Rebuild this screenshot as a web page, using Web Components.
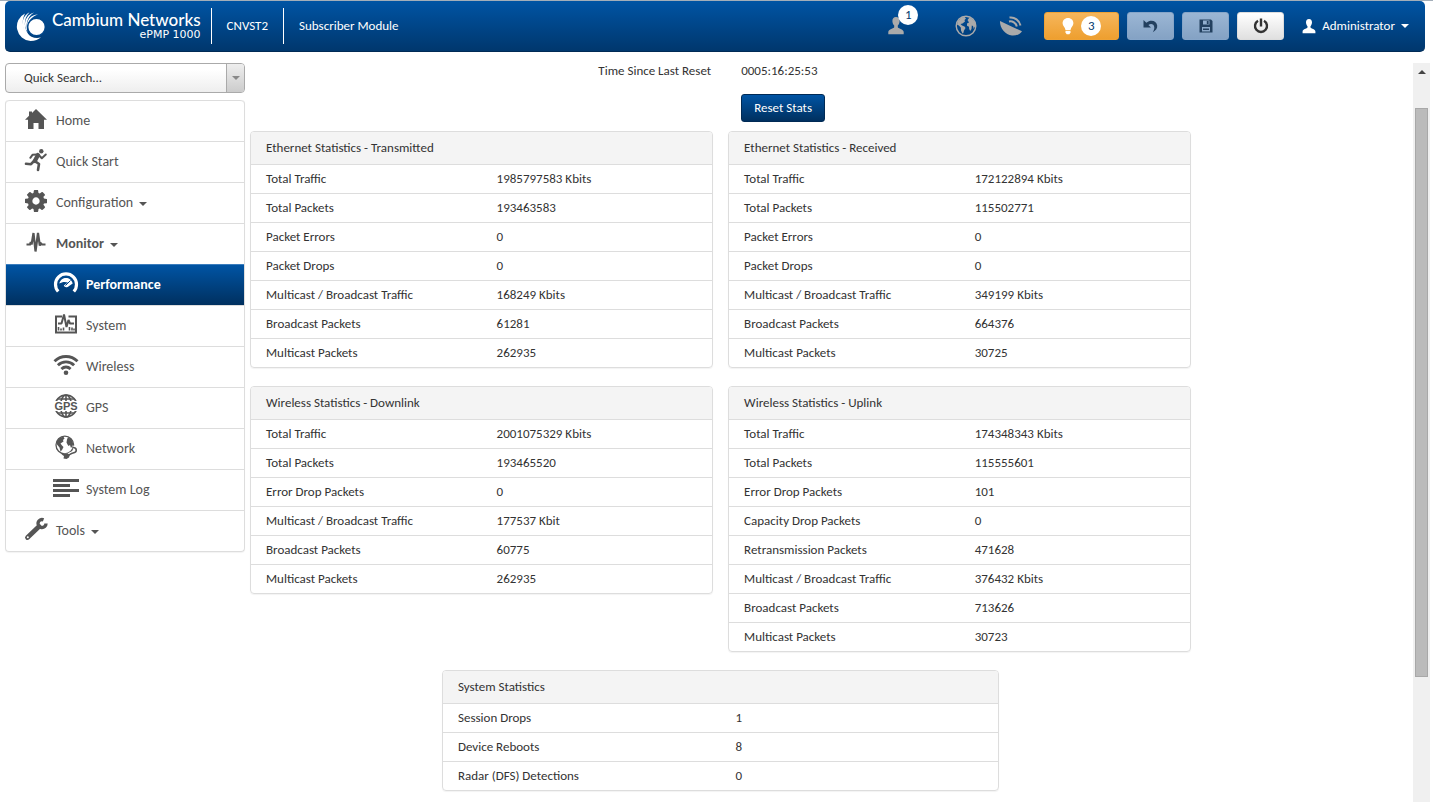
<!DOCTYPE html>
<html lang="en">
<head>
<meta charset="utf-8">
<title>ePMP 1000 - Performance</title>
<style>
    body {
        margin: 0;
        background: white;
        color: #333;
        font: 13px/16px Calibri, Carlito, Lato, sans-serif;
    }
</style>
</head>
<body>
<ap-shell>
    <top-bar slot="header" device="CNVST2" mode="Subscriber Module" user="Administrator"></top-bar>
    <quick-search slot="side"></quick-search>
    <side-nav slot="side">
        <nav-item icon="home">Home</nav-item>
        <nav-item icon="run">Quick Start</nav-item>
        <nav-item icon="cog" caret>Configuration</nav-item>
        <nav-item icon="pulse" caret open>Monitor</nav-item>
        <nav-item icon="gauge" sub active>Performance</nav-item>
        <nav-item icon="system" sub>System</nav-item>
        <nav-item icon="wifi" sub>Wireless</nav-item>
        <nav-item icon="gps" sub>GPS</nav-item>
        <nav-item icon="network" sub>Network</nav-item>
        <nav-item icon="log" sub>System Log</nav-item>
        <nav-item icon="wrench" caret>Tools</nav-item>
    </side-nav>
    <performance-page></performance-page>
</ap-shell>

<script>
const icons = {
    logo: `<svg viewBox="0 0 29 29" width="29" height="29" fill="currentColor">
        <path d="M9 1.500A14.500 14.500 0 0 0 14.500 29C19 29 22.500 27.500 25 25.300C13 29 2 15 9 1.500Z"/>
        <path d="M13.500 .3C4 5 4.500 19 14 24.500C7.500 17 7 7 13.500 .3Z"/>
        <path d="M18 .5C9 3 6.500 13 11.500 20C9.500 12 11 5 18 .5Z"/>
        <path d="M22 2.500C15 2.500 10.500 8 11.200 14C13 8 16 4.500 22 2.500Z"/>
        <circle cx="20.500" cy="15" r="8.800" stroke="#00478c" stroke-width="1.400"/>
    </svg>`,
    user: `<svg viewBox="0 0 16 18" width="16" height="18" fill="currentColor">
        <path d="M8 0C5.500 0 4.300 1.800 4.400 4.300C4.500 6.200 5.200 7.600 6.200 8.600V10.200C6 11.500 .5 11.800 .3 15V17.200H15.700V15C15.500 11.800 10 11.500 9.800 10.200V8.600C10.800 7.600 11.500 6.200 11.600 4.300C11.700 1.800 10.500 0 8 0Z"/>
    </svg>`,
    account: `<svg viewBox="0 0 16 18" width="14" height="15" fill="currentColor">
        <path d="M8 0C5.500 0 4.300 1.800 4.400 4.300C4.500 6.200 5.200 7.600 6.200 8.600V10.200C6 11.500 .5 11.800 .3 15V17.200H15.700V15C15.500 11.800 10 11.500 9.800 10.200V8.600C10.800 7.600 11.500 6.200 11.600 4.300C11.700 1.800 10.500 0 8 0Z"/>
    </svg>`,
    globe: `<svg viewBox="0 0 22 22" width="22" height="22">
        <circle cx="11" cy="11" r="9.800" fill="none" stroke="currentColor" stroke-width="1.400"/>
        <g fill="currentColor">
            <path d="M3 6L6.500 2.600L9.500 2L11 3.500L9.500 5L10 6.500L7.500 8.500L5.500 9L7 10.500L9.500 11.500L10.500 13L9 15.500L8.300 18L7.500 18.500L6 15.500L5.800 12.500L3.800 10.500L2 9.500Z"/>
            <path d="M12.500 5L14.500 2.500L17.500 4L20 7.500L20.800 11.500L19.500 12L18.800 14L18 11L16.800 10.500L16.500 14L15.200 16L14.200 14L14 11.800L12 10.800L12 8.500L14 7.500Z"/>
        </g>
    </svg>`,
    dish: `<svg viewBox="0 0 24 22" width="24" height="22">
        <path d="M1 6C.5 12.500 6 20 13 20.500C17.500 20.800 21.500 19 23 16.200L12.500 11.500Z" fill="currentColor"/>
        <path d="M10 6.500C13.500 5.800 17 8 17.800 11.500M10.500 2.600C15.500 1.800 20.500 5.500 21.500 10.500" fill="none" stroke="currentColor" stroke-width="2"/>
    </svg>`,
    bulb: `<svg viewBox="0 0 12 17" width="12" height="17" fill="currentColor">
        <path d="M6 0C2.700 0 .6 2.300 .6 5.200C.6 8 3 9 3.500 12H8.500C9 9 11.400 8 11.400 5.200C11.400 2.300 9.300 0 6 0Z"/>
        <path d="M3.500 12.800H8.500V14.500L7.300 16.200H4.700L3.500 14.500Z"/>
    </svg>`,
    undo: `<svg viewBox="0 0 15 14" width="15" height="14" fill="currentColor">
        <path d="M.5 1V8.500H8L5.400 6C8 4.200 11 5.200 11.300 8.300C11.400 10 10.800 11.700 9.800 13.200C13 11.500 14.500 9.200 14.200 6.600C13.500 1.500 7.500 .2 3.300 3.800Z"/>
    </svg>`,
    save: `<svg viewBox="0 0 14 14" width="14" height="14" fill="currentColor">
        <path fill-rule="evenodd" d="M.5 .5H12L13.500 2V13.500H.5ZM4 1.500V5.500H10.500V1.500ZM3 8V12.500H11V8ZM7.800 2H9.600V5H7.800Z"/>
        <path d="M4 9.500H10V11H4Z"/>
    </svg>`,
    power: `<svg viewBox="0 0 16 16" width="16" height="16" fill="none" stroke="currentColor" stroke-width="2.400">
        <path d="M5 2.800A6 6 0 1 0 11 2.800M8 .5V8.500"/>
    </svg>`,
    home: `<svg viewBox="0 0 24 24" width="24" height="24" fill="currentColor">
        <path d="M12 2L23 12.800H20V22H14.500V16H9.500V22H4V12.800H1L5 8.800V4.500H8V6Z"/>
    </svg>`,
    run: `<svg viewBox="0 0 24 24" width="24" height="24">
        <circle cx="17.300" cy="3.300" r="2.200" fill="currentColor"/>
        <g fill="none" stroke="currentColor" stroke-linecap="round" stroke-linejoin="round">
            <path d="M14 7L10.800 13" stroke-width="4.200"/>
            <path d="M13 6.500L8.500 6.800L6.300 9.800M15.200 7.500L17.800 10.200L21.800 6.500" stroke-width="2"/>
            <path d="M11.500 13.500L15 16L14 22M10 13L7 16.200L2 15.800" stroke-width="2.600"/>
        </g>
    </svg>`,
    cog: `<svg viewBox="0 0 1536 1536" width="22" height="22" fill="currentColor">
        <path d="M1024 768q0-106-75-181t-181-75-181 75-75 181 75 181 181 75 181-75 75-181zm512-109v222q0 12-8 23t-20 13l-185 28q-19 54-39 91 35 50 107 138 10 12 10 25t-9 23q-27 37-99 108t-94 71q-12 0-26-9l-138-108q-44 23-91 38-16 136-29 186-7 28-36 28h-222q-14 0-24.500-8.500t-11.500-21.500l-28-184q-49-16-90-37l-141 107q-10 9-25 9-14 0-25-11-126-114-165-168-7-10-7-23 0-12 8-23 15-21 51-66.500t54-70.500q-27-50-41-99l-183-27q-13-2-21-12.500t-8-23.500v-222q0-12 8-23t19-13l186-28q14-46 39-92-40-57-107-138-10-12-10-24 0-10 9-23 26-36 98.500-107.500t94.500-71.500q13 0 26 10l138 107q44-23 91-38 16-136 29-186 7-28 36-28h222q14 0 24.500 8.500t11.500 21.500l28 184q49 16 90 37l142-107q9-9 24-9 13 0 25 10 129 119 165 170 7 8 7 22 0 12-8 23-15 21-51 66.500t-54 70.500q26 50 41 98l183 28q13 2 21 12.500t8 23.500z"/>
    </svg>`,
    pulse: `<svg viewBox="0 0 24 24" width="24" height="24" fill="none" stroke="currentColor" stroke-width="2.200" stroke-miterlimit="2" stroke-linejoin="miter">
        <path d="M2.500 14.500H6L6.800 12L7.600 14.500L9.500 3L11.500 21.500L14 3L15.800 15.500L17 13.500L18 14.500H21.500"/>
    </svg>`,
    gauge: `<svg viewBox="0 0 26 24" width="26" height="24">
        <path d="M5.200 20.500A10.500 10.500 0 1 1 20.800 20.500" fill="none" stroke="currentColor" stroke-width="3.200"/>
        <path d="M6.300 12.500C7.500 8.500 10 7 13 7S18.500 8.500 19.700 12.500L15.800 15.300A3 3 0 0 1 10.800 14.500L15 11.500C12 10.500 9 10.800 6.300 12.500Z" fill="currentColor"/>
        <path d="M17.500 9.500L12.500 14.500" stroke="#00468c" stroke-width="1"/>
    </svg>`,
    system: `<svg viewBox="0 0 24 24" width="24" height="24" fill="none" stroke="currentColor" stroke-width="2">
        <path d="M8 4.500H2V20.500H22V4.500H14.500"/>
        <path d="M4 11.500H7.500L10 2.500L12.500 15L14.500 8L16 11.500H20" stroke-linejoin="bevel" stroke-width="2"/>
        <path d="M4.500 15V18.500M7 16.500V18.500M9.500 15.500V18.500M15.500 15V18.500M18 15.500V18.500M20 16.500V18.500" stroke-width="1.600"/>
    </svg>`,
    wifi: `<svg viewBox="0 0 26 24" width="26" height="24">
        <path d="M1.500 8.200C8 1.900 18 1.900 24.500 8.200M4.900 12.200C9.500 7.800 16.500 7.800 21.100 12.200M8.400 16C11.200 13.400 14.800 13.400 17.600 16" fill="none" stroke="currentColor" stroke-width="2.900"/>
        <circle cx="13" cy="19.800" r="2.300" fill="currentColor"/>
    </svg>`,
    gps: `<svg viewBox="0 0 26 24" width="26" height="24">
        <g fill="none" stroke="currentColor" stroke-width="1.600">
            <circle cx="13" cy="12" r="11"/>
            <ellipse cx="13" cy="12" rx="5.500" ry="11"/>
            <path d="M13 1V23M4.500 5H21.500M4.500 19H21.500"/>
        </g>
        <path d="M0 7H26V17H0Z" fill="white"/>
        <text x="13" y="16" text-anchor="middle" font-family="Liberation Sans" font-size="11" font-weight="bold" fill="currentColor">GPS</text>
    </svg>`,
    network: `<svg viewBox="0 0 26 24" width="26" height="24">
        <circle cx="11.800" cy="10" r="8.800" fill="none" stroke="currentColor" stroke-width="1.300"/>
        <g fill="currentColor">
            <path d="M4 6L7 2.500L10.500 1.800L11.500 3.500L10 5L10.500 6.500L7.500 8.500L9 10.500L10.500 12L9 15L7.500 16.500L6.500 12.500L4 9.500Z"/>
            <path d="M14 4.500L15 2L18.500 4.500L20.300 8.500L19.500 11L18 13L17 10L15.500 11L14.500 9.500L13.500 7.500Z"/>
        </g>
        <path d="M20 12.500C24.500 13 24.500 17.500 20 18.200C18 18.500 17 19.500 15.500 20.200L10 21" fill="none" stroke="white" stroke-width="4"/>
        <path d="M19.500 12.300C24.500 12.800 24.500 17.300 20 18C18 18.300 17 19.500 15.500 20.200" fill="none" stroke="currentColor" stroke-width="1.500"/>
        <path d="M8.500 19.500L10.500 18.500L14.500 18.300L16.800 20L16 22.500L13.500 24L10.500 23.500L11 21Z" fill="currentColor"/>
    </svg>`,
    log: `<svg viewBox="0 0 26 24" width="26" height="24" fill="currentColor">
        <path d="M0 3H26V6H0ZM0 8H17V11H0ZM0 13H26V16H0ZM0 18H17V21H0Z"/>
    </svg>`,
    wrench: `<svg viewBox="0 0 24 24" width="24" height="24" fill="none" stroke="currentColor">
        <path d="M3.500 20.500L15 9.500" stroke-width="4.800" stroke-linecap="round"/>
        <path d="M19.500 2.800A4 4 0 1 0 22 6.500" stroke-width="3.400"/>
        <circle cx="3.800" cy="20.200" r="1" fill="white" stroke="none"/>
    </svg>`,
}

class UiElement extends HTMLElement {
    connectedCallback () {
        if(this.shadowRoot) return
        this.attachShadow({mode: 'open'}).innerHTML = this.render()
    }
    attr(name) {
        return this.getAttribute(name) || ''
    }
}

class UiIcon extends UiElement {
    render() {
        return /* HTML */`
<style>
    :host { display: inline-flex; flex: none; }
    svg { display: block; }
</style>
${icons[this.attr('name')]}`
    }
}
customElements.define('ui-icon', UiIcon)

class UiCaret extends UiElement {
    render() {
        return /* HTML */`
<style>
    :host {
        display: inline-block;
        flex: none;
        border: 4px solid transparent;
        border-top-color: currentColor;
        border-bottom: 0;
    }
    :host([up]) {
        border-top: 0;
        border-bottom: 4px solid currentColor;
    }
</style>`
    }
}
customElements.define('ui-caret', UiCaret)

class ApShell extends UiElement {
    render() {
        return /* HTML */`
<style>
    :host {
        display: flex;
        flex-direction: column;
        min-height: 100vh;
        box-sizing: border-box;
        border-top: 1px solid #a3aeb9;
    }
    .body {
        flex: 1;
        display: flex;
        gap: 5px;
        padding: 11px 3px 0 5px;
    }
    aside {
        flex: none;
        width: 240px;
        display: flex;
        flex-direction: column;
        gap: 7px;
    }
    main {
        flex: 1;
    }
    scroll-rail {
        margin-left: -4px;
    }
</style>
<slot name="header"></slot>
<div class="body">
    <aside><slot name="side"></slot></aside>
    <main><slot></slot></main>
    <scroll-rail></scroll-rail>
</div>`
    }
}
customElements.define('ap-shell', ApShell)

class ScrollRail extends UiElement {
    render() {
        return /* HTML */`
<style>
    :host {
        display: flex;
        flex-direction: column;
        align-items: center;
        width: 17px;
        color: #444;
        background: #f0f0f0;
    }
    ui-caret {
        margin: 7px 0 34px;
    }
    .thumb {
        width: 13px;
        flex: 0 0 77%;
        background: #bbb;
        border: 1px solid #a8a8a8;
        box-sizing: border-box;
    }
</style>
<ui-caret up></ui-caret>
<div class="thumb"></div>`
    }
}
customElements.define('scroll-rail', ScrollRail)

class TopBar extends UiElement {
    render() {
        return /* HTML */`
<style>
    :host {
        display: flex;
        align-items: center;
        height: 51px;
        margin: 0 8px 0 5px;
        padding: 0 16px 0 11px;
        box-sizing: border-box;
        border-radius: 5px;
        border-bottom: 1px solid #002a55;
        background: linear-gradient(#0054a4, #00376d);
        color: white;
    }
    .brand {
        display: flex;
        align-items: center;
        gap: 7px;
        padding-right: 10px;
    }
    .name {
        text-align: right;
        font: 500 17px/17px Lato, sans-serif;
    }
    .model {
        font: 11px/14px "DejaVu Sans", sans-serif;
    }
    .cell {
        border-left: 1px solid white;
        line-height: 36px;
        padding: 0 15px;
    }
    .status {
        margin-left: auto;
        display: flex;
        align-items: center;
        color: #aaa;
    }
    .clients {
        position: relative;
        display: flex;
        margin-right: 51px;
    }
    .globe {
        margin-right: 22px;
    }
    .badge {
        display: inline-block;
        min-width: 20px;
        border-radius: 10px;
        background: white;
        color: #00376d;
        line-height: 20px;
        text-align: center;
    }
    .clients .badge {
        position: absolute;
        left: 10px;
        top: -12px;
    }
    .tools {
        display: flex;
        gap: 8px;
        margin: 0 18px 0 21px;
    }
    button {
        display: flex;
        align-items: center;
        justify-content: center;
        gap: 7px;
        width: 47px;
        height: 28px;
        padding: 0;
        border: 1px solid #86a5c8;
        border-radius: 3px;
        background: linear-gradient(#9bb6d4, #84a2c4);
        color: #23405f;
        font: inherit;
    }
    .alert {
        width: 75px;
        color: white;
        border-color: #eea236;
        background: linear-gradient(#f6b65c, #ee9f2f);
    }
    .power {
        color: #333;
        border-color: #ddd;
        background: linear-gradient(white, #e0e0e0);
    }
    a {
        display: flex;
        align-items: center;
        gap: 6px;
        color: white;
        text-decoration: none;
    }
</style>
<div class="brand">
    <ui-icon name="logo"></ui-icon>
    <div class="name">Cambium Networks<div class="model">ePMP 1000</div></div>
</div>
<div class="cell">${this.attr('device')}</div>
<div class="cell">${this.attr('mode')}</div>
<div class="status">
    <div class="clients"><ui-icon name="user"></ui-icon><span class="badge">1</span></div>
    <ui-icon class="globe" name="globe"></ui-icon>
    <ui-icon name="dish"></ui-icon>
</div>
<div class="tools">
    <button class="alert" aria-label="Notifications"><ui-icon name="bulb"></ui-icon><span class="badge">3</span></button>
    <button aria-label="Undo"><ui-icon name="undo"></ui-icon></button>
    <button aria-label="Save"><ui-icon name="save"></ui-icon></button>
    <button class="power" aria-label="Reboot"><ui-icon name="power"></ui-icon></button>
</div>
<a href="#account"><ui-icon name="account"></ui-icon>${this.attr('user')}<ui-caret></ui-caret></a>`
    }
}
customElements.define('top-bar', TopBar)

class QuickSearch extends UiElement {
    render() {
        return /* HTML */`
<style>
    :host {
        display: flex;
        height: 30px;
        box-sizing: border-box;
        border: 1px solid #aaa;
        border-radius: 4px;
        background: linear-gradient(white 20%, #eee);
        overflow: hidden;
    }
    select {
        flex: 1;
        appearance: none;
        border: 0;
        padding: 0 18px;
        background: none;
        color: #333;
        font: inherit;
    }
    .arrow {
        display: flex;
        align-items: center;
        justify-content: center;
        width: 17px;
        border-left: 1px solid #aaa;
        background: linear-gradient(#eee, #ccc);
        color: #888;
    }
</style>
<select aria-label="Quick Search"><option>Quick Search...</option></select>
<span class="arrow"><ui-caret></ui-caret></span>`
    }
}
customElements.define('quick-search', QuickSearch)

class SideNav extends UiElement {
    render() {
        return /* HTML */`
<style>
    :host {
        display: block;
        border: 1px solid #ddd;
        border-top: 0;
        border-radius: 4px;
        box-shadow: 0 1px 1px rgba(0,0,0,0.05);
    }
    nav {
        display: flex;
        flex-direction: column;
    }
    ::slotted(nav-item:first-child) {
        border-radius: 4px 4px 0 0;
    }
</style>
<nav><slot></slot></nav>`
    }
}
customElements.define('side-nav', SideNav)

class NavItem extends UiElement {
    render() {
        const caret = this.hasAttribute('caret') ? '<ui-caret></ui-caret>' : ''
        return /* HTML */`
<style>
    :host {
        display: block;
        border-top: 1px solid #ddd;
        color: #555;
        font-size: 14px;
    }
    a {
        display: flex;
        align-items: center;
        height: 40px;
        padding-left: 18px;
        color: inherit;
        text-decoration: none;
    }
    ui-icon {
        width: 24px;
        justify-content: center;
        margin-right: 8px;
        padding-bottom: 4px;
    }
    ui-caret {
        margin: 2px 0 0 6px;
    }
    :host([sub]) a {
        padding-left: 47px;
    }
    :host([sub]) ui-icon {
        width: 26px;
        margin-right: 7px;
    }
    :host([open]), :host([active]) {
        font-weight: bold;
    }
    :host([active]) {
        color: white;
        border-top-color: #3b7dbd;
        background: linear-gradient(#0054a4, #00305f);
    }
</style>
<a href="#${this.attr('icon')}"><ui-icon name="${this.attr('icon')}"></ui-icon><slot></slot>${caret}</a>`
    }
}
customElements.define('nav-item', NavItem)

class StatPanel extends HTMLElement {
    set data({title, rows}) {
        if(!this.shadowRoot) this.attachShadow({mode: 'open'})
        this.shadowRoot.innerHTML = /* HTML */`
<style>
    :host {
        display: block;
        border: 1px solid #ddd;
        border-radius: 4px;
        box-shadow: 0 1px 1px rgba(0,0,0,0.05);
        overflow: hidden;
    }
    table {
        width: 100%;
        table-layout: fixed;
        border-spacing: 0;
    }
    caption {
        padding: 8px 15px;
        background: #f4f4f4;
        text-align: left;
    }
    th, td {
        height: 28px;
        padding: 0 15px;
        border-top: 1px solid #ddd;
        font-weight: normal;
        text-align: left;
    }
</style>
<table>
    <caption>${title}</caption>
    ${rows.map(([label, value]) => `<tr><th scope="row">${label}</th><td>${value}</td></tr>`).join('')}
</table>`
    }
}
customElements.define('stat-panel', StatPanel)

const stats = [
    {title: 'Ethernet Statistics - Transmitted', rows: [
        ['Total Traffic', '1985797583 Kbits'],
        ['Total Packets', '193463583'],
        ['Packet Errors', '0'],
        ['Packet Drops', '0'],
        ['Multicast / Broadcast Traffic', '168249 Kbits'],
        ['Broadcast Packets', '61281'],
        ['Multicast Packets', '262935'],
    ]},
    {title: 'Ethernet Statistics - Received', rows: [
        ['Total Traffic', '172122894 Kbits'],
        ['Total Packets', '115502771'],
        ['Packet Errors', '0'],
        ['Packet Drops', '0'],
        ['Multicast / Broadcast Traffic', '349199 Kbits'],
        ['Broadcast Packets', '664376'],
        ['Multicast Packets', '30725'],
    ]},
    {title: 'Wireless Statistics - Downlink', rows: [
        ['Total Traffic', '2001075329 Kbits'],
        ['Total Packets', '193465520'],
        ['Error Drop Packets', '0'],
        ['Multicast / Broadcast Traffic', '177537 Kbit'],
        ['Broadcast Packets', '60775'],
        ['Multicast Packets', '262935'],
    ]},
    {title: 'Wireless Statistics - Uplink', rows: [
        ['Total Traffic', '174348343 Kbits'],
        ['Total Packets', '115555601'],
        ['Error Drop Packets', '101'],
        ['Capacity Drop Packets', '0'],
        ['Retransmission Packets', '471628'],
        ['Multicast / Broadcast Traffic', '376432 Kbits'],
        ['Broadcast Packets', '713626'],
        ['Multicast Packets', '30723'],
    ]},
    {title: 'System Statistics', rows: [
        ['Session Drops', '1'],
        ['Device Reboots', '8'],
        ['Radar (DFS) Detections', '0'],
    ]},
]

class PerformancePage extends UiElement {
    connectedCallback () {
        super.connectedCallback()
        this.shadowRoot.querySelectorAll('stat-panel').forEach((panel, i) => {
            panel.data = stats[i]
        })
    }
    render() {
        return /* HTML */`
<style>
    :host {
        display: block;
        width: 81%;
        padding-bottom: 10px;
    }
    .reset {
        display: grid;
        grid-template-columns: 49% auto;
        gap: 15px 30px;
        justify-items: start;
        margin-bottom: 9px;
    }
    .reset label {
        justify-self: end;
    }
    button {
        grid-column: 2;
        height: 28px;
        padding: 0 12px;
        border: 1px solid #002a55;
        border-radius: 3px;
        background: linear-gradient(#0054a4, #00305f);
        color: white;
        font: inherit;
    }
    .panels {
        display: grid;
        grid-template-columns: 1fr 1fr;
        gap: 18px 15px;
        align-items: start;
    }
    .wide {
        grid-column: 1 / 3;
        width: 59%;
        justify-self: center;
    }
</style>
<div class="reset">
    <label for="since">Time Since Last Reset</label>
    <output id="since">0005:16:25:53</output>
    <button>Reset Stats</button>
</div>
<div class="panels">
    <stat-panel></stat-panel>
    <stat-panel></stat-panel>
    <stat-panel></stat-panel>
    <stat-panel></stat-panel>
    <stat-panel class="wide"></stat-panel>
</div>`
    }
}
customElements.define('performance-page', PerformancePage)
</script>
</body>
</html>
